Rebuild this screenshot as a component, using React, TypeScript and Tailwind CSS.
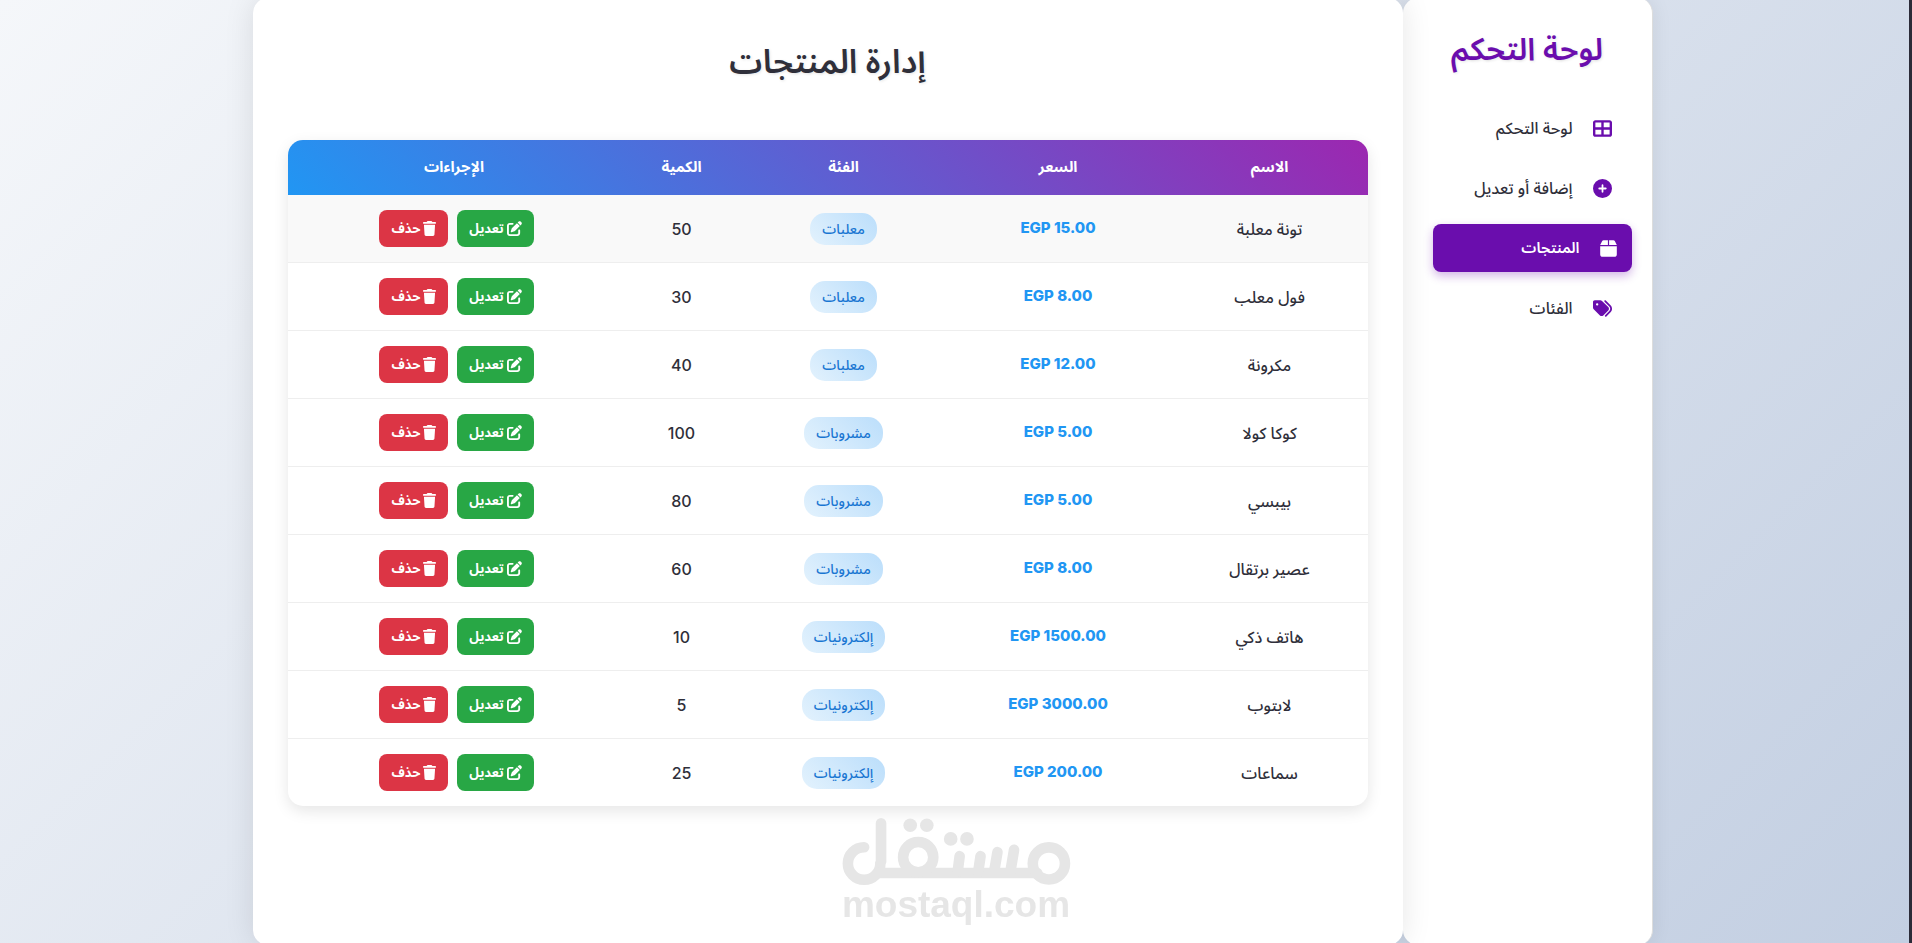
import React from "react";
import { FaTableCellsLarge, FaCirclePlus, FaBox, FaTags, FaPenToSquare, FaTrash } from "react-icons/fa6";

const nav = [
  { label: "لوحة التحكم", Icon: FaTableCellsLarge, size: "w-[19px]" },
  { label: "إضافة أو تعديل", Icon: FaCirclePlus, size: "w-[19px]" },
  { label: "المنتجات", Icon: FaBox, size: "w-[17px]", active: true },
  { label: "الفئات", Icon: FaTags, size: "w-[19px]" },
];

const products = [
  { name: "تونة معلبة", price: "15.00", category: "معلبات", qty: 50 },
  { name: "فول معلب", price: "8.00", category: "معلبات", qty: 30 },
  { name: "مكرونة", price: "12.00", category: "معلبات", qty: 40 },
  { name: "كوكا كولا", price: "5.00", category: "مشروبات", qty: 100 },
  { name: "بيبسي", price: "5.00", category: "مشروبات", qty: 80 },
  { name: "عصير برتقال", price: "8.00", category: "مشروبات", qty: 60 },
  { name: "هاتف ذكي", price: "1500.00", category: "إلكترونيات", qty: 10 },
  { name: "لابتوب", price: "3000.00", category: "إلكترونيات", qty: 5 },
  { name: "سماعات", price: "200.00", category: "إلكترونيات", qty: 25 },
];

function Sidebar() {
  return (
    <aside className="w-[250px] shrink-0 rounded-[15px] border-r border-[#ddd] bg-white px-[25px] pt-[30px] shadow-[0_0_20px_rgba(0,0,0,0.08)]">
      <h2 className="mb-[34px] text-center text-[31px] leading-[42px] font-semibold text-[#6a0dad] [text-shadow:1px_1px_3px_rgba(0,0,0,0.1)]">
        لوحة التحكم
      </h2>
      <nav className="flex flex-col gap-3">
        {nav.map(({ label, Icon, size, active }) => (
          <a
            key={label}
            href="#"
            className={
              active
                ? "flex h-12 translate-x-[5px] items-center gap-5 rounded-lg bg-[#6a0dad] px-[15px] text-[15px] font-semibold text-white shadow-[0_4px_10px_rgba(106,13,173,0.3)]"
                : "flex h-12 items-center gap-5 rounded-lg px-[15px] font-medium text-[#2f2f3a]"
            }
          >
            <Icon className={`h-[19px] shrink-0 ${size} ${active ? "text-white" : "text-[#6a0dad]"}`} />
            {label}
          </a>
        ))}
      </nav>
    </aside>
  );
}

function ProductTable() {
  return (
    <div className="overflow-hidden rounded-[15px] shadow-[0_5px_15px_rgba(0,0,0,0.1)]">
      <table className="w-full table-fixed border-separate border-spacing-0 text-center">
        <colgroup>
          <col className="w-[196px]" />
          <col className="w-[227px]" />
          <col className="w-[202px]" />
          <col className="w-[122px]" />
          <col className="w-[333px]" />
        </colgroup>
        <thead className="bg-[linear-gradient(45deg,#2196f3,#9c27b0)] text-white">
          <tr className="h-[55px]">
            {["الاسم", "السعر", "الفئة", "الكمية", "الإجراءات"].map((h) => (
              <th key={h} scope="col" className="text-[15px] font-bold">
                {h}
              </th>
            ))}
          </tr>
        </thead>
        <tbody className="text-[#2f2f3a]">
          {products.map((p) => (
            <tr
              key={p.name}
              className="h-[68px] first:bg-[#f9f9f9] last:h-[67px] *:border-b *:border-[#eee] *:py-0 last:*:border-b-0"
            >
              <td className="font-medium">{p.name}</td>
              <td className="text-[15px] font-extrabold text-[#2196f3]">
                <bdi dir="ltr">EGP {p.price}</bdi>
              </td>
              <td>
                <div className="flex justify-center">
                  <span className="flex h-8 items-center rounded-[15px] bg-[linear-gradient(45deg,#e3f2fd,#bbdefb)] px-3 text-sm font-medium text-[#1976d2]">
                    {p.category}
                  </span>
                </div>
              </td>
              <td className="font-medium">{p.qty}</td>
              <td>
                <div className="flex justify-center gap-1 text-[13px] font-bold text-white">
                  <button type="button" className="ml-[5px] flex h-[37px] items-center gap-[3px] rounded-lg bg-[#28a745] px-3">
                    <FaPenToSquare className="size-[15px]" />
                    تعديل
                  </button>
                  <button type="button" className="ml-[5px] flex h-[37px] items-center gap-[3px] rounded-lg bg-[#dc3545] px-3">
                    <FaTrash className="h-[15px] w-[13px]" />
                    حذف
                  </button>
                </div>
              </td>
            </tr>
          ))}
        </tbody>
      </table>
    </div>
  );
}

function Watermark() {
  return (
    <div dir="ltr" className="pointer-events-none fixed inset-x-0 bottom-[18px] flex flex-col items-center text-[#e6e6e6]">
      <svg viewBox="63 84 687 202" className="h-[67px] w-[229px]" fill="none" stroke="currentColor" strokeLinecap="round">
        <g fill="currentColor" stroke="none">
          <circle cx="267" cy="106" r="20.5" />
          <circle cx="317" cy="106" r="20.5" />
          <circle cx="389" cy="147" r="20.5" />
          <circle cx="438" cy="147" r="20.5" />
        </g>
        <g strokeWidth="32">
          <path d="M128 172A49 49 0 1 0 177 221L179 215V100" />
          <path d="M172 250H650" />
          <circle cx="291" cy="202" r="45.5" />
          <path d="M416 199L410 246M479 199L472 246M530 187L520 246M580 180L569 246" />
          <circle cx="685" cy="221" r="48.5" />
        </g>
      </svg>
      <span className="font-['Liberation_Sans',Arial,sans-serif] text-[37px] leading-10 font-bold">mostaql.com</span>
    </div>
  );
}

export default function App() {
  return (
    <div
      dir="rtl"
      className="flex min-h-screen flex-col overflow-hidden border-r-[3px] border-[#2b2b38] bg-[linear-gradient(135deg,#f5f7fa,#c3cfe2)] pr-1 font-['Inter','Noto_Sans_Arabic','Noto_Sans',sans-serif] text-base"
    >
      <div className="-my-0.5 mx-auto flex w-full max-w-[1400px] grow">
        <Sidebar />
        <main className="relative grow rounded-[15px] bg-white px-[35px] pt-[35px] pb-[35px] shadow-[0_0_30px_rgba(0,0,0,0.1)]">
          <h1 className="mb-[51px] text-center text-[33px] leading-[56px] font-semibold text-[#2f2f3a] [text-shadow:1px_1px_3px_rgba(0,0,0,0.1)]">
            إدارة المنتجات
          </h1>
          <ProductTable />
        </main>
      </div>
      <Watermark />
    </div>
  );
}
